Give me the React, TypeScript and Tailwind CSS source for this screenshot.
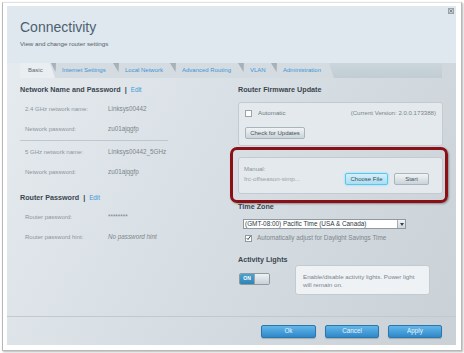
import React from "react";

function Heading({ title, edit }: { title: string; edit?: boolean }) {
  return (
    <div className="flex items-center h-[10px] text-[7.2px] font-bold text-[#3b4650]">
      <span>{title}</span>
      {edit && (
        <>
          <span className="mx-[4px] text-[#3b4650]">|</span>
          <span className="font-normal text-[6.3px] text-[#3c98d6]">Edit</span>
        </>
      )}
    </div>
  );
}

function Row({ label, value, italic }: { label: string; value: string; italic?: boolean }) {
  return (
    <div className="flex items-center h-[20px] pl-[5px]">
      <span className="w-[83px] text-[6px] text-[#8c959c]">{label}</span>
      <span className={`text-[6.3px] text-[#7c858c] ${italic ? "italic" : ""}`}>{value}</span>
    </div>
  );
}

function Wedge() {
  return (
    <svg width="6" height="15" viewBox="0 0 6 15" className="block shrink-0">
      <rect width="6" height="15" fill="#d4dce2" />
      <polygon points="0,0 6,0 5.5,9" fill="#a7b1b8" />
    </svg>
  );
}

function Tab({ label, w, active }: { label: string; w: string; active?: boolean }) {
  return (
    <div
      className={`${w} h-full flex items-center pl-[6px] text-[6px] ${
        active ? "bg-[#e9eef1] text-[#5f6971] pl-[8px]" : "bg-[#d4dce2] text-[#3b95d5]"
      }`}
    >
      {label}
    </div>
  );
}

function GrayButton({ label, w }: { label: string; w: string }) {
  return (
    <div
      className={`${w} h-[12px] flex items-center justify-center rounded-[2px] border border-[#a9b4bb] bg-[linear-gradient(#f1f4f6,#cbd4da)] text-[6px] text-[#48535b]`}
    >
      {label}
    </div>
  );
}

function BlueButton({ label, w }: { label: string; w: string }) {
  return (
    <div
      className={`${w} h-[13px] flex items-center justify-center rounded-[2px] border border-[#2b76ae] bg-[linear-gradient(#62b6e8,#2f88c9)] text-[6.3px] text-[#e8f4fb] shadow-[0_1px_1px_rgba(0,0,0,0.2)]`}
    >
      {label}
    </div>
  );
}

export default function App() {
  return (
    <div className="w-[464px] h-[353px] bg-white overflow-hidden font-['Liberation_Sans',Arial,sans-serif]">
      <div className="ml-[2px] mt-[2px] w-[460px] h-[349px] border border-[#b8b8b8] border-t-[#e2e2e2] shadow-[1px_1px_2px_rgba(0,0,0,0.3)] pl-[4px] pr-[5px] pt-[3px] pb-[5px]">
        <div className="relative w-[449px] h-[339px] flex flex-col bg-[linear-gradient(120deg,#e6ecf0,#d6dde2_55%,#cad1d6)]">
          {/* close */}
          <div className="absolute top-[2px] right-[2px] w-[6px] h-[6px] border border-[#9aa3a9] bg-[#c9d0d5] flex items-center justify-center">
            <svg width="4" height="4" viewBox="0 0 4 4">
              <path d="M0.5 0.5L3.5 3.5M3.5 0.5L0.5 3.5" stroke="#6f787e" strokeWidth="0.8" />
            </svg>
          </div>

          {/* header */}
          <div className="h-[57px] bg-[#dfe8ee] px-[13px] pt-[13px]">
            <div className="text-[14px] leading-[16px] text-[#4c6070]">Connectivity</div>
            <div className="mt-[5px] text-[6.2px] leading-[8px] text-[#56616b]">View and change router settings</div>
          </div>

          {/* tabs */}
          <div className="h-[15px] px-[13px]">
            <div className="w-[422px] h-full flex bg-[linear-gradient(#cbd5dc,#c2ccd3)]">
              <Tab label="Basic" w="w-[30px]" active />
              <svg width="6" height="15" viewBox="0 0 6 15" className="block shrink-0">
                <rect width="6" height="15" fill="#d4dce2" />
                <polygon points="0,0 0,15 5,15" fill="#e9eef1" />
                <polygon points="1,0 6,0 5.5,9" fill="#a7b1b8" />
              </svg>
              <Tab label="Internet Settings" w="w-[57px]" />
              <Wedge />
              <Tab label="Local Network" w="w-[51px]" />
              <Wedge />
              <Tab label="Advanced Routing" w="w-[62px]" />
              <Wedge />
              <Tab label="VLAN" w="w-[27px]" />
              <Wedge />
              <Tab label="Administration" w="w-[52px]" />
              <svg width="5" height="15" viewBox="0 0 5 15" className="block shrink-0">
                <polygon points="0,0 5,15 0,15" fill="#d4dce2" />
              </svg>
            </div>
          </div>

          {/* body */}
          <div className="h-[238px] px-[13px] flex gap-[13px]">
            {/* left */}
            <div className="w-[205px] pt-[7px]">
              <Heading title="Network Name and Password" edit />
              <div className="mt-[4px]">
                <Row label="2.4 GHz network name:" value="Linksys00442" />
                <Row label="Network password:" value="zu01ajqgfp" />
              </div>
              <div className="mt-[1px] h-px w-[148px] bg-[#c0c7cc]" />
              <div className="mt-[1px]">
                <Row label="5 GHz network name:" value="Linksys00442_5GHz" />
                <Row label="Network password:" value="zu01ajqgfp" />
              </div>
              <div className="mt-[11px]">
                <Heading title="Router Password" edit />
              </div>
              <div className="mt-[4px]">
                <Row label="Router password:" value="********" />
                <Row label="Router password hint:" value="No password hint" italic />
              </div>
            </div>

            {/* right */}
            <div className="w-[205px] pt-[7px]">
              <Heading title="Router Firmware Update" />
              <div className="mt-[7px] h-[44px] rounded-[3px] border border-[#c3cbd1] bg-[#e3e9ed] px-[6px] pt-[5px]">
                <div className="flex items-center h-[10px]">
                  <div className="w-[7px] h-[7px] border border-[#9aa4ab] bg-white" />
                  <span className="ml-[6px] text-[6.2px] text-[#6f7981]">Automatic</span>
                  <span className="ml-auto text-[6.1px] text-[#7c858c]">(Current Version: 2.0.0.173388)</span>
                </div>
                <div className="mt-[9px]">
                  <GrayButton label="Check for Updates" w="w-[60px]" />
                </div>
              </div>

              <div className="relative mt-[11px] h-[37px] rounded-[3px] border border-[#c3cbd1] bg-[#e3e9ed] pl-[5px] pr-[13px] pt-[7px]">
                <div className="h-[8px] leading-[8px] text-[6px] text-[#8a939a]">Manual:</div>
                <div className="flex items-center h-[12px]">
                  <span className="text-[6.2px] text-[#99a2a8]">frc-offseason-simp...</span>
                  <div className="ml-auto w-[43px] h-[12px] flex items-center justify-center rounded-[2px] border border-[#5cc6ee] bg-[linear-gradient(#d3f0fb,#a9dff4)] shadow-[0_0_2px_#6fd3f7] text-[6px] text-[#3f4a52]">
                    Choose File
                  </div>
                  <div className="ml-[6px]">
                    <GrayButton label="Start" w="w-[35px]" />
                  </div>
                </div>
                <div className="absolute z-10 -left-[9px] -top-[11px] -right-[6px] -bottom-[10px] rounded-[7px] border-[3px] border-[#8a1016] shadow-[1px_1px_2px_rgba(0,0,0,0.35)]" />
              </div>

              <div className="mt-[8px]">
                <Heading title="Time Zone" />
              </div>
              <div className="mt-[7px] ml-[5px] w-[163px] h-[10px] bg-white border border-[#8f999f] flex items-center">
                <span className="flex-1 pl-[1px] text-[6.4px] text-[#2f3a42]">(GMT-08:00) Pacific Time (USA &amp; Canada)</span>
                <div className="w-[8px] h-full border-l border-[#a3acb2] bg-[linear-gradient(#f2f4f6,#cfd6db)] flex items-center justify-center">
                  <svg width="4" height="3" viewBox="0 0 4 3">
                    <polygon points="0,0 4,0 2,3" fill="#3a4248" />
                  </svg>
                </div>
              </div>
              <div className="mt-[4px] h-[10px] flex items-center pl-[7px]">
                <div className="w-[7px] h-[7px] border border-[#8f999f] bg-white flex items-center justify-center">
                  <svg width="6" height="6" viewBox="0 0 6 6">
                    <path d="M0.8 3.2L2.4 4.8L5.4 0.6" fill="none" stroke="#2b3238" strokeWidth="1.1" />
                  </svg>
                </div>
                <span className="ml-[5px] text-[6.3px] text-[#7d868d]">Automatically adjust for Daylight Savings Time</span>
              </div>

              <div className="mt-[13px] h-[9px] flex items-center text-[7.2px] font-bold text-[#3b4650]">Activity Lights</div>
              <div className="flex">
                <div className="ml-[1px] mt-[8px] w-[31px] h-[12px] rounded-[2px] border border-[#8e9aa2] flex overflow-hidden">
                  <div className="w-[14px] h-full bg-[linear-gradient(#4da3cf,#2f84b6)] flex items-center justify-center text-[5px] font-bold text-white">
                    ON
                  </div>
                  <div className="flex-1 h-full bg-[linear-gradient(#eef2f4,#c8d1d7)] border-l border-[#9aa5ac]" />
                </div>
                <div className="ml-auto mr-[13px] w-[135px] h-[30px] rounded-[3px] border border-[#c3cbd1] bg-[#eef2f5] px-[7px] pt-[7px] text-[6.2px] leading-[8px] text-[#7b848b]">
                  <div>Enable/disable activity lights. Power light</div>
                  <div>will remain on.</div>
                </div>
              </div>
            </div>
          </div>

          {/* footer */}
          <div className="h-[29px] border-t border-[#c2c9ce] flex items-center justify-end pr-[14px] gap-[9px]">
            <BlueButton label="Ok" w="w-[55px]" />
            <BlueButton label="Cancel" w="w-[54px]" />
            <BlueButton label="Apply" w="w-[54px]" />
          </div>
        </div>
      </div>
    </div>
  );
}
